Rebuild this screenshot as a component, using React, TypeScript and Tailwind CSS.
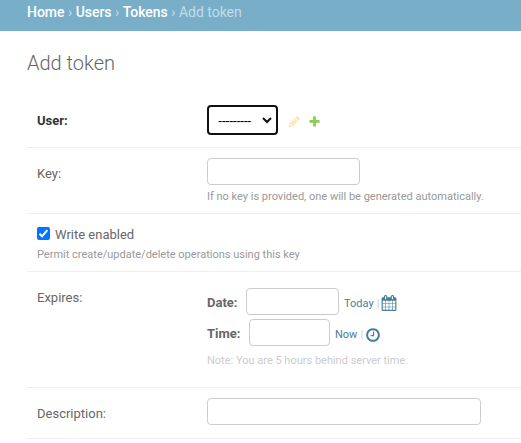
import type { ReactNode } from "react";

const input = "block h-[27px] rounded-[4px] border border-[#ccc] bg-white outline-none";

function Glyph({ d, className }: { d: string; className: string }) {
  return (
    <svg viewBox="0 0 1792 1792" fill="currentColor" className={`shrink-0 ${className}`}>
      <path d={d} />
    </svg>
  );
}

const pencil =
  "M491 1536l91-91-235-235-91 91v107h128v128h107zm523-928q0-22-22-22-10 0-17 7l-542 542q-7 7-7 17 0 22 22 22 10 0 17-7l542-542q7-7 7-17zm-54-192l416 416-832 832h-416v-416zm683 96q0 53-37 90l-166 166-416-416 166-165q36-38 90-38 53 0 91 38l235 234q37 39 37 91z";
const plus =
  "M1600 796v192q0 40-28 68t-68 28h-416v416q0 40-28 68t-68 28h-192q-40 0-68-28t-28-68v-416h-416q-40 0-68-28t-28-68v-192q0-40 28-68t68-28h416v-416q0-40 28-68t68-28h192q40 0 68 28t28 68v416h416q40 0 68 28t28 68z";
const calendar =
  "M192 1664h288v-288h-288v288zm352 0h320v-288h-320v288zm-352-352h288v-320h-288v320zm352 0h320v-320h-320v320zm-352-384h288v-288h-288v288zm736 736h320v-288h-320v288zm-384-736h320v-288h-320v288zm768 736h288v-288h-288v288zm-384-352h320v-320h-320v320zm-352-864v-288q0-13-9.5-22.5t-22.5-9.5h-64q-13 0-22.5 9.5t-9.5 22.5v288q0 13 9.5 22.5t22.5 9.5h64q13 0 22.5-9.5t9.5-22.5zm736 864h288v-320h-288v320zm-384-384h320v-288h-320v288zm384 0h288v-288h-288v288zm32-480v-288q0-13-9.5-22.5t-22.5-9.5h-64q-13 0-22.5 9.5t-9.5 22.5v288q0 13 9.5 22.5t22.5 9.5h64q13 0 22.5-9.5t9.5-22.5zm384-64v1280q0 52-38 90t-90 38h-1408q-52 0-90-38t-38-90v-1280q0-52 38-90t90-38h128v-96q0-66 47-113t113-47h64q66 0 113 47t47 113v96h384v-96q0-66 47-113t113-47h64q66 0 113 47t47 113v96h128q52 0 90 38t38 90z";
const clock =
  "M1024 544v448q0 14-9 23t-23 9h-320q-14 0-23-9t-9-23v-64q0-14 9-23t23-9h224v-352q0-14 9-23t23-9h64q14 0 23 9t9 23zm416 352q0-148-73-273t-198-198-273-73-273 73-198 198-73 273 73 273 198 198 273 73 273-73 198-198 73-273zm224 0q0 209-103 385.5t-279.5 279.5-385.5 103-385.5-103-279.5-279.5-103-385.5 103-385.5 279.5-279.5 385.5-103 385.5 103 279.5 279.5 103 385.5z";

function Row({ className, children }: { className: string; children: ReactNode }) {
  return <div className={`flex items-start border-b border-[#eee] pl-[10px] ${className}`}>{children}</div>;
}

export default function App() {
  return (
    <div className="h-[443px] w-[521px] overflow-hidden bg-white font-['Roboto',sans-serif] text-[13px] leading-5 text-[#666]">
      <nav className="h-[31px] bg-[#79aec8] pt-[2px] pl-[27px] text-[14px] tracking-[-0.016px] whitespace-pre text-[#c4dce8]">
        <a className="font-medium text-white">Home</a> › <a className="font-medium text-white">Users</a> ›{" "}
        <a className="font-medium text-white">Tokens</a> › Add token
      </nav>
      <main className="pl-[27px]">
        <h1 className="h-[63px] pt-[20px] text-[20px] leading-6 font-light">Add token</h1>

        <Row className="h-[54px]">
          <label className="w-[170px] pt-[17px] font-bold text-[#333]">User:</label>
          <div className="flex items-center pt-[11px]">
            <div className="flex h-[30px] w-[71px] items-center rounded-[4px] border-2 border-[#101010] pr-[4px] pl-[9px] font-['Liberation_Sans',sans-serif] text-[13.333px] tracking-[-0.8px] text-black">
              <span className="pt-[2px]">---------</span>
              <svg viewBox="0 0 10 7" className="ml-auto h-[7px] w-[10px]" fill="none" stroke="#101010" strokeWidth="2">
                <path d="M1 1l4 4 4-4" />
              </svg>
            </div>
            <Glyph d={pencil} className="mt-[3px] ml-[10px] size-[13px] text-[#efb80b] opacity-30" />
            <Glyph d={plus} className="mt-[3px] ml-[7px] size-[13px] text-[#70bf2b] opacity-80" />
          </div>
        </Row>

        <Row className="h-[66px]">
          <label className="w-[170px] pt-[16px]">Key:</label>
          <div className="pt-[10px]">
            <input className={`${input} w-[153px]`} />
            <p className="pt-[4px] text-[11px] leading-4 text-[#999]">
              If no key is provided, one will be generated automatically.
            </p>
          </div>
        </Row>

        <Row className="h-[58px]">
          <div className="pt-[10px]">
            <div className="flex items-start">
              <span className="mt-[3px] flex size-[13px] items-center justify-center rounded-[2px] bg-[#0075ff]">
                <svg viewBox="0 0 13 13" className="size-[13px]" fill="none" stroke="white" strokeWidth="2">
                  <path d="M2.5 6.8l2.6 2.5 5.2-6.2" />
                </svg>
              </span>
              <label className="ml-[5px] pt-px">Write enabled</label>
            </div>
            <p className="pt-[2px] text-[11px] leading-4 text-[#999]">
              Permit create/update/delete operations using this key
            </p>
          </div>
        </Row>

        <Row className="h-[116px]">
          <label className="w-[170px] pt-[16px]">Expires:</label>
          <div className="pt-[16px]">
            <div className="flex h-[27px] items-center">
              <b className="w-[39px] pt-[2px]">Date:</b>
              <input className={`${input} w-[93px]`} />
              <span className="ml-[5px] pt-[4px] text-[11px] text-[#447e9b]">Today</span>
              <span className="ml-[3px] pt-[4px] text-[11px] text-[#ccc]">|</span>
              <Glyph d={calendar} className="mt-[3px] ml-[2px] size-4 text-[#447e9b]" />
            </div>
            <div className="mt-[4px] flex h-[27px] items-center">
              <b className="w-[42px] pt-[2px]">Time:</b>
              <input className={`${input} w-[81px]`} />
              <span className="ml-[5px] pt-[4px] text-[11px] text-[#447e9b]">Now</span>
              <span className="ml-[3px] pt-[4px] text-[11px] text-[#ccc]">|</span>
              <Glyph d={clock} className="mt-[5px] ml-[2px] size-4 text-[#447e9b]" />
            </div>
            <p className="pt-[7px] text-[11px] leading-4 text-[#ccc]">Note: You are 5 hours behind server time.</p>
          </div>
        </Row>

        <Row className="h-[51px]">
          <label className="w-[170px] pt-[16px]">Description:</label>
          <div className="pt-[10px]">
            <input className={`${input} w-[274px]`} />
          </div>
        </Row>
      </main>
    </div>
  );
}
